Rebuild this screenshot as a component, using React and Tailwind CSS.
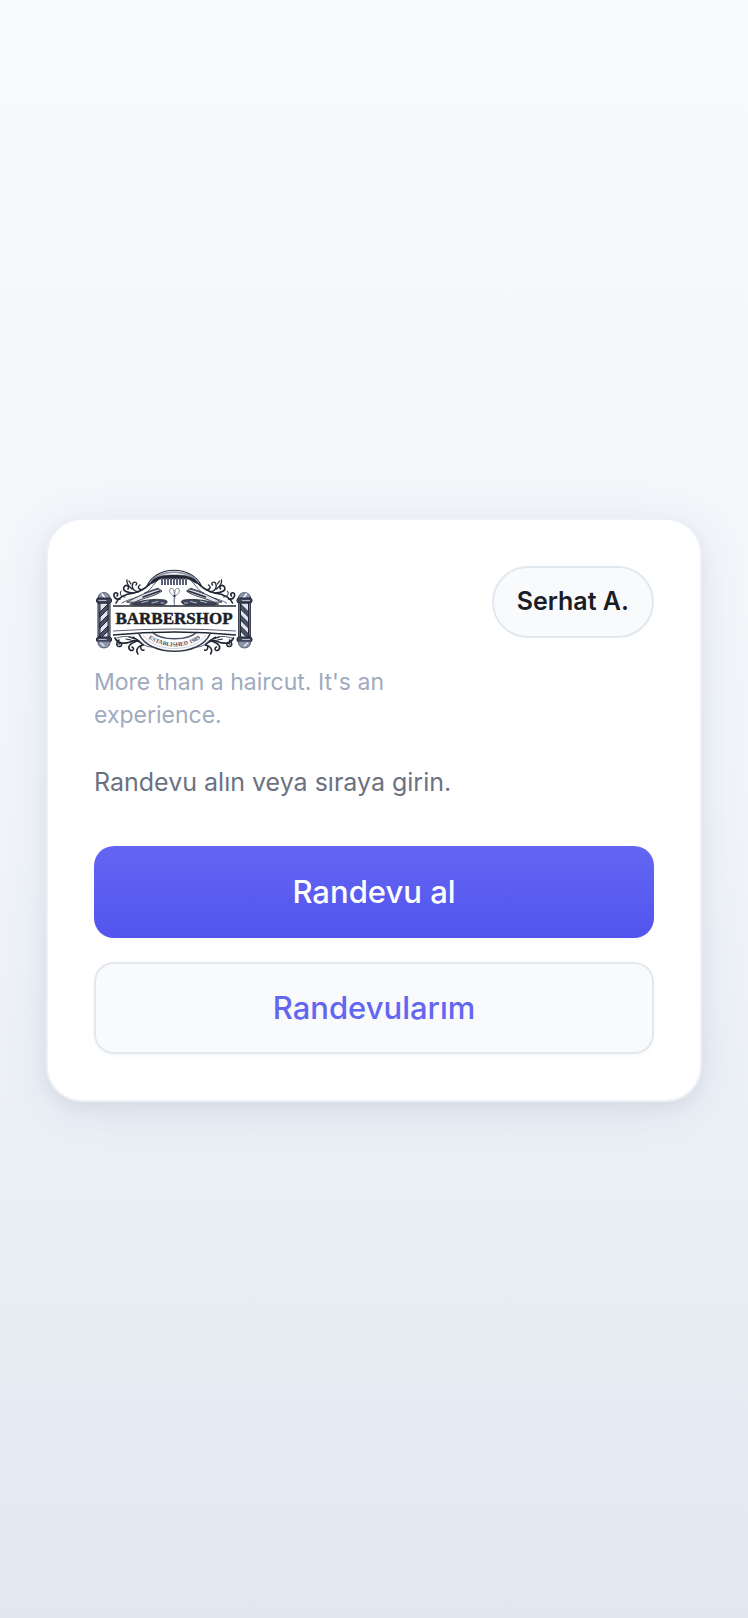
function LogoPole() {
  return (
    <g>
      <rect x="10" y="42" width="12" height="38" fill="#7c8399" />
      <rect x="12" y="43" width="8" height="36" fill="#dfe3ee" />
      <path
        d="M12 52 L20 44 V49 L12 57Z M12 63 L20 55 V60 L12 68Z M12 74 L20 66 V71 L12 79Z"
        fill="#4a5066"
      />
      <path d="M10.5 43 V79 M21.5 43 V79" stroke="#5a6178" />
      <path d="M10 40 C8 30 24 30 22 40Z" fill="#8d94aa" stroke="#5a6178" />
      <path d="M14 34 L17 38" stroke="#fff" strokeWidth="1.5" />
      <rect x="8.5" y="38" width="15" height="5" rx="2" fill="#3f4558" />
      <path d="M11 40.5 H18" stroke="#b8bdce" />
      <rect x="8.5" y="77" width="15" height="5" rx="2" fill="#3f4558" />
      <path d="M11 79.5 H18" stroke="#b8bdce" />
      <path d="M10 82 C9 90 23 90 22 82Z" fill="#8d94aa" stroke="#5a6178" />
      <path d="M13 83 L16 86" stroke="#e5e8f2" strokeWidth="1.5" />
    </g>
  );
}

function LogoSide() {
  return (
    <g fill="none" stroke="#232733" strokeLinecap="round">
      <LogoPole />
      {/* upper scrolls */}
      <path d="M28 43 C31 36 38 34 46 33 C54 31 61 26 66 19" strokeWidth="1.6" />
      <path d="M34 43 C42 38 52 38 58 33 C63 29 66 24 70 20" stroke="#596078" />
      <path d="M46 33 C40 33 34 31 36 27 C38 24 42 26 40 29" strokeWidth="1.6" />
      <path d="M50 32 C45 31 43 27 45 23 C47 21 50 23 48 25" strokeWidth="1.4" />
      <path d="M54 30 C50 29 49 27 52 25" strokeWidth="1.4" />
      <path d="M44 29 C41 26 38 24 39 20 M43 24 L41 21" strokeWidth="1.3" />
      <path d="M32 39 C28 40 25 37 26 34 C28 31 31 34 29 36" strokeWidth="1.7" />
      <path d="M37 37 C33 37 31 34 33 31" />
      {/* lower scrolls */}
      <path d="M27 78 C30 84 37 84 42 82 C46 80 51 80 55 85" strokeWidth="1.7" />
      <path d="M29 78 C37 75 47 76 54 83 C57 86 60 87 64 87" stroke="#596078" />
      <path d="M31 80 C27 84 29 88 33 86 C35 84 32 82 31 84" strokeWidth="1.6" />
      <path d="M49 81 C42 83 39 87 42 90 C45 92 47 88 44 87" strokeWidth="1.6" />
      <path d="M55 85 C50 86 47 90 50 94 M53 86 C52 89 54 91 56 90" strokeWidth="1.5" />
      <path d="M38 79 L43 80 M41 77 L47 79 M45 77 L51 81" strokeWidth="1.2" />
      {/* razors */}
      <path d="M39 42 C49 37 60 31 71 29 L74 31 C68 36 55 38 47 42Z" fill="#dfe3ee" strokeWidth="0.9" />
      <path d="M55 37 L72 31" strokeWidth="1.4" />
      <path d="M57 33 L70 28.5" stroke="#4a5066" strokeWidth="1.4" />
      <path d="M42 44 C51 41 66 38 77 40 C81 41 79 44 75 45 H46Z" fill="#3f4558" strokeWidth="0.7" />
      <path d="M54 42.5 L60 41 M64 43 L70 41.5 M73 43 H76" stroke="#b8bdce" />
    </g>
  );
}

function BarberLogo() {
  return (
    <svg
      aria-label="Barbershop, established 1989"
      className="block h-[92px] w-[160px]"
      role="img"
      viewBox="6 6 160 92"
    >
      <LogoSide />
      <g transform="translate(172.5 0) scale(-1 1)">
        <LogoSide />
      </g>

      {/* arch and comb */}
      <g fill="none" stroke="#232733">
        <path d="M59 26 C68 5 104 5 113.500 26" strokeWidth="1.2" />
        <path d="M62 23 C71 8.500 101 8.500 110.500 23" stroke="#8d94aa" strokeWidth="1.6" />
        <path d="M62 24 C67 15 76 15 86 15 C96 15 105 15 110.500 24 C105 23 103 19 99 19 H73 C70 19 68 23 62 24Z" fill="#232733" strokeWidth="0.5" />
        <path d="M73 21.500 H100" stroke="#5a6178" strokeDasharray="2 1" strokeWidth="7" />
      </g>

      {/* scissors */}
      <g fill="none" stroke="#7c8399">
        <path d="M85.500 36 C82 34 81 31 82 29 C85 27 87 30 86 36 L86.500 47" />
        <path d="M87 36 C91 34 92 31 91 29 C88 27 86 30 87 36 L86 43" />
        <circle cx="86.500" cy="36" r="1" fill="#232733" stroke="none" />
      </g>

      {/* seal */}
      <path d="M51 74 C61 97 112 97 122 74" fill="#fff" stroke="#343a4b" strokeWidth="1.6" />
      <path d="M55 75 C67 93 106 93 118 75" fill="none" stroke="#c9cede" strokeWidth="1" />
      <path d="M64 72 C73 81 100 81 109 72" fill="none" stroke="#4a5066" strokeWidth="1.4" />
      <path id="seal-line" d="M58 77 Q86.500 96 115 77" fill="none" />
      <text className="font-['Liberation_Serif',serif] text-[6px] font-bold" fill="#4a5066" textAnchor="middle">
        <textPath href="#seal-line" startOffset="50%">
          ESTABLISHED 1989
        </textPath>
      </text>

      {/* banner */}
      <path d="M25 46 H148 V75 Q86.500 66 25 75Z" fill="#fff" />
      <path d="M25 46 H148" stroke="#232733" strokeWidth="1.4" />
      <path d="M25 71 Q86.500 67 148 71" fill="none" stroke="#596078" strokeWidth="1" />
      <path d="M25 75 Q86.500 69 148 75" fill="none" stroke="#232733" strokeWidth="1.4" />
      <text
        className="font-['Liberation_Serif',serif] text-[17px] font-bold"
        fill="#1c1f28"
        stroke="#1c1f28"
        strokeWidth="0.5"
        textAnchor="middle"
        x="86"
        y="64"
      >
        BARBERSHOP
      </text>
    </svg>
  );
}

export default function App() {
  return (
    <main className="flex min-h-screen items-center justify-center bg-linear-to-b from-[#f8fafc] via-[#f1f5f9] to-[#e2e8f0] px-[46px] pt-0.5 font-['Inter',sans-serif]">
      <section className="w-full max-w-3xl rounded-[36px] border-2 border-[#edf1f7] bg-white p-[46px] shadow-[0_8px_48px_rgba(71,85,155,0.10),0_6px_16px_rgba(15,23,42,0.05)]">
        <header className="flex items-start justify-between gap-6">
          <div className="max-w-[320px]">
            <BarberLogo />
            <p className="mt-2 text-[23px] leading-[33px] text-[#a0aabf]">More than a haircut. It's an experience.</p>
          </div>
          <button
            className="h-[72px] shrink-0 rounded-full border-2 border-[#e2e8f0] bg-[#f8fafc] px-[23px] text-[25px] font-semibold text-[#1a1d26]"
            type="button"
          >
            Serhat A.
          </button>
        </header>

        <p className="mt-8 text-[25px] leading-9 text-[#6b7280]">Randevu alın veya sıraya girin.</p>

        <div className="mt-[46px] flex flex-col gap-6">
          <button
            className="h-[92px] w-full rounded-[20px] bg-linear-to-b from-[#6366f1] to-[#5254ee] text-[31px] font-medium text-white shadow-[0_2px_4px_rgba(15,23,42,0.03)]"
            type="button"
          >
            Randevu al
          </button>
          <button
            className="h-[92px] w-full rounded-[20px] border-2 border-[#e2e8f0] bg-[#f8fafc] text-[31px] font-medium text-[#6366f1] shadow-[0_2px_4px_rgba(15,23,42,0.03)]"
            type="button"
          >
            Randevularım
          </button>
        </div>
      </section>
    </main>
  );
}
